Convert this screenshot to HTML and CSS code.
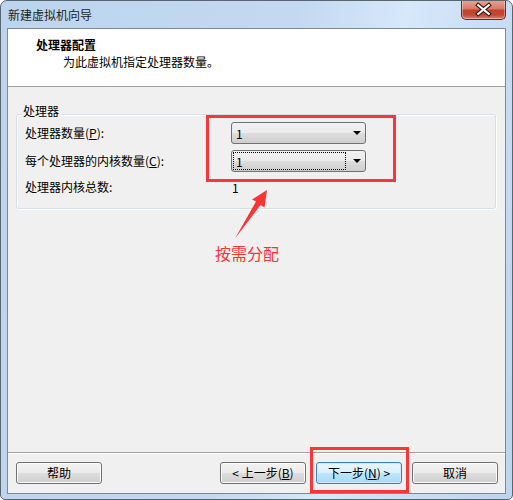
FILE: index.html
```html
<!DOCTYPE html>
<html lang="zh-CN">
<head>
<meta charset="utf-8">
<title>新建虚拟机向导</title>
<link rel="stylesheet" href="styles.css">
</head>
<body>
<div class="window">
  <div class="titlebar">
    <span class="title">新建虚拟机向导</span>
    <div class="close">
      <svg width="45" height="20" viewBox="0 0 45 20">
        <path d="M17 5 L28 14 M28 5 L17 14" stroke="#3a1a14" stroke-width="4.5" stroke-linecap="square"/>
        <path d="M17 5 L28 14 M28 5 L17 14" stroke="#ffffff" stroke-width="2.2" stroke-linecap="square"/>
      </svg>
    </div>
  </div>
  <div class="client">
    <div class="header">
      <div class="h-title">处理器配置</div>
      <div class="h-sub">为此虚拟机指定处理器数量。</div>
    </div>
    <div class="content">
      <div class="group">
        <div class="legend">处理器</div>
        <div class="rows">
          <div class="label">处理器数量(<u>P</u>):</div>
          <div class="combo"><span class="val">1</span><span class="arrow"></span></div>
          <div class="label">每个处理器的内核数量(<u>C</u>):</div>
          <div class="combo"><span class="val focus">1</span><span class="arrow"></span></div>
          <div class="label last">处理器内核总数:</div>
          <div class="total">1</div>
        </div>
      </div>
    </div>
    <div class="footer">
      <button class="btn">帮助</button>
      <div class="spacer"></div>
      <button class="btn">&lt; 上一步(<u>B</u>)</button>
      <button class="btn default">下一步(<u>N</u>) &gt;</button>
      <button class="btn">取消</button>
    </div>
  </div>

  <div class="mark mark-combo"></div>
  <div class="mark mark-next"></div>
  <svg class="arrow-note" width="513" height="500" viewBox="0 0 513 500">
    <polygon points="267,190 264.5,207.5 260.5,205 235,238.5 256,201.5 252,199.5" fill="#f83434"/>
  </svg>
  <div class="note">按需分配</div>
</div>
</body>
</html>
```
FILE: styles.css
```css
* { box-sizing: border-box; }
html, body { margin: 0; padding: 0; background: #ffffff; }
body {
  font-family: "Noto Sans CJK SC", "Noto Sans", sans-serif;
  font-size: 12px;
  color: #000;
}
.window {
  position: relative;
  width: 513px;
  height: 500px;
  border: 1px solid #5a6572;
  border-radius: 7px 7px 5px 5px;
  background: linear-gradient(100deg, #bcd4ee 0%, #c3d9f1 50%, #d6e8fa 68%, #c7ddf3 85%, #bcd4ee 100%);
  overflow: hidden;
}
.titlebar {
  height: 27px;
  display: flex;
  align-items: flex-start;
  padding: 0 6px 0 7px;
}
.title {
  line-height: 27px;
  color: #1e1e1e;
}
.close {
  margin-left: auto;
  width: 45px;
  height: 20px;
  margin-top: -1px;
  border: 1px solid #6b2a20;
  border-top: none;
  border-radius: 0 0 5px 5px;
  background: linear-gradient(180deg, #e8a594 0%, #d67a68 45%, #c0412c 55%, #c24a36 80%, #d98a6e 100%);
  box-shadow: inset 0 0 0 1px rgba(255,255,255,0.35);
  display: flex;
  align-items: center;
  justify-content: center;
}
.close svg { display: block; }
.client {
  margin: 0 6px;
  height: 466px;
  border: 1px solid #7d8a99;
  background: #f0f0f0;
  display: flex;
  flex-direction: column;
}
.header {
  height: 58px;
  background: #ffffff;
  border-bottom: 1px solid #a0a0a0;
  padding: 7px 0 0 0;
  flex: none;
}
.h-title {
  font-weight: bold;
  padding-left: 28px;
  line-height: 17px;
}
.h-sub {
  padding-left: 55px;
  line-height: 17px;
}
.content {
  flex: 1;
  padding: 27px 9px 0 8px;
}
.group {
  border: 1px solid #d5dfe5;
  border-radius: 3px;
  height: 95px;
  box-shadow: inset 1px 1px 0 #ffffff, 1px 1px 0 #ffffff;
}
.legend {
  display: inline-block;
  margin: -12px 0 0 5px;
  padding: 0 2px 0 1px;
  background: #f0f0f0;
  line-height: 16px;
  vertical-align: top;
}
.rows {
  display: grid;
  grid-template-columns: 206px 135px;
  grid-auto-rows: 28px;
  align-items: center;
  padding: 0 0 0 8px;
  margin-top: -13px;
}
.label { white-space: nowrap; line-height: 16px; }
.combo {
  height: 22px;
  border: 1px solid #707070;
  border-radius: 3px;
  background: linear-gradient(180deg, #f2f2f2 0%, #ebebeb 48%, #dddddd 52%, #cfcfcf 100%);
  display: flex;
  align-items: center;
  padding: 1px;
}
.val {
  display: block;
  width: 113px;
  height: 18px;
  line-height: 18px;
  padding-left: 2px;
  border: 1px solid transparent;
}
.val.focus { border: 1px dotted #000; }
.arrow {
  margin-left: 7px;
  width: 0;
  height: 0;
  border-left: 4px solid transparent;
  border-right: 4px solid transparent;
  border-top: 4px solid #000;
}
.label.last, .total { margin-top: -4px; }
.total { padding-left: 1px; }
.footer {
  height: 41px;
  flex: none;
  border-top: 1px solid #a0a0a0;
  box-shadow: inset 0 1px 0 #ffffff;
  display: flex;
  align-items: flex-start;
  padding: 9px 7px 0 8px;
  gap: 10px;
}
.spacer { flex: 1; }
.btn {
  width: 86px;
  height: 22px;
  font: inherit;
  color: #000;
  border: 1px solid #707070;
  border-radius: 3px;
  background: linear-gradient(180deg, #f2f2f2 0%, #ebebeb 48%, #dddddd 52%, #cfcfcf 100%);
  box-shadow: inset 0 0 0 1px #fcfcfc;
  padding: 0;
  line-height: 18px;
}
.btn.default {
  border-color: #3c7fb1;
  background: linear-gradient(180deg, #eaf6fd 0%, #d9f0fc 48%, #bee6fd 52%, #a7d9f5 100%);
  box-shadow: inset 0 0 0 1px #cfeaf9;
}
.btn u { text-decoration: underline; }
.mark {
  position: absolute;
  border: 3px solid #f83838;
}
.mark-combo { left: 205px; top: 114px; width: 190px; height: 67px; }
.mark-next { left: 309px; top: 446px; width: 99px; height: 46px; }
.arrow-note { position: absolute; left: -1px; top: -1px; }
.note {
  position: absolute;
  left: 214px;
  top: 241px;
  font-size: 16px;
  line-height: 22px;
  color: #f83434;
}
```
